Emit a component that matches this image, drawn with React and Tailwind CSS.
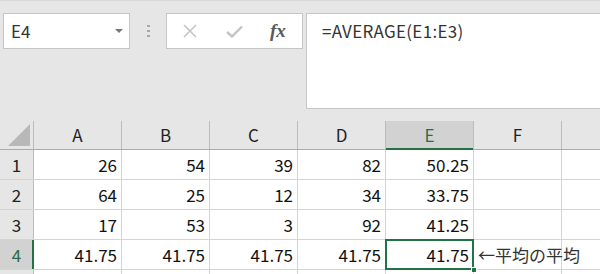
import React from "react";

const FONT = { fontFamily: '"Noto Sans CJK JP", "Noto Sans", sans-serif' };

const cols = ["A", "B", "C", "D", "E", "F"];
const rows = [
  ["26", "54", "39", "82", "50.25", ""],
  ["64", "25", "12", "34", "33.75", ""],
  ["17", "53", "3", "92", "41.25", ""],
  ["41.75", "41.75", "41.75", "41.75", "41.75", ""],
];

const FormulaArea = () => (
  <div className="flex h-[121px] bg-[#e6e6e6] border-t border-[#d9d9d9] pl-[3px] pt-[12px]">
    {/* name box */}
    <div className="relative flex h-[36px] w-[127px] items-center border border-[#c6c6c6] bg-white pl-[7px] text-[17px] text-[#333]">
      E4
      <span className="absolute right-[6px] top-[15px] h-0 w-0 border-x-[4px] border-t-[4px] border-x-transparent border-t-[#777]"></span>
    </div>
    {/* grip dots */}
    <div className="ml-[17px] mt-[12px] flex h-[13px] flex-col gap-[3px]">
      <span className="h-[2px] w-[3px] bg-[#a8a8a8]"></span>
      <span className="h-[2px] w-[3px] bg-[#a8a8a8]"></span>
      <span className="h-[2px] w-[3px] bg-[#a8a8a8]"></span>
    </div>
    {/* cancel / enter / fx */}
    <div className="ml-[16px] flex h-[36px] w-[137px] items-center border border-[#c6c6c6] bg-white">
      <svg width="14" height="14" viewBox="0 0 14 14" className="ml-[16px]">
        <path d="M1 1 L13 13 M13 1 L1 13" stroke="#c4c4c4" strokeWidth="1.6" fill="none" />
      </svg>
      <svg width="17" height="13" viewBox="0 0 17 13" className="ml-[29px]">
        <path d="M1 7 L6 11.5 L16 1.5" stroke="#c4c4c4" strokeWidth="2.4" fill="none" />
      </svg>
      <span
        className="ml-[27px] text-[19px] font-bold italic text-[#5a5a5a]"
        style={{ fontFamily: '"Liberation Serif", "DejaVu Serif", serif' }}
      >
        fx
      </span>
    </div>
    {/* formula input */}
    <div className="ml-[3px] h-[96px] flex-1 border border-r-0 border-[#c6c6c6] bg-white pl-[15px] pt-[4px] text-[17px] tracking-[0.3px] text-[#333]">
      =AVERAGE(E1:E3)
    </div>
  </div>
);

const Grid = () => (
  <div className="bg-white">
    {/* column headers */}
    <div className="flex h-[29px] bg-[#e6e6e6] border-b border-[#ababab]">
      <div className="relative w-[34px] shrink-0 border-r border-[#bcbcbc]">
        <svg width="22" height="22" viewBox="0 0 22 22" className="absolute right-[3px] bottom-[3px]">
          <polygon points="22,0 22,22 0,22" fill="#b8b8b8" />
        </svg>
      </div>
      {cols.map((c) => (
        <div
          key={c}
          className={
            c === "E"
              ? "relative flex w-[88px] shrink-0 items-center justify-center border-r border-[#bcbcbc] bg-[#d2d2d2] text-[17px] text-[#2c6b47]"
              : "flex w-[88px] shrink-0 items-center justify-center border-r border-[#bcbcbc] text-[17px] text-[#222]"
          }
        >
          {c}
          {c === "E" && <span className="absolute -bottom-px left-0 right-0 h-[2px] bg-[#217346]"></span>}
        </div>
      ))}
      <div className="flex-1"></div>
    </div>
    {rows.map((r, i) => (
      <div key={i} className="flex h-[30px] border-b border-[#d4d4d4]">
        <div
          className={
            i === 3
              ? "relative flex w-[34px] shrink-0 items-center justify-center border-r border-[#bcbcbc] bg-[#d2d2d2] text-[17px] text-[#2c6b47]"
              : "flex w-[34px] shrink-0 items-center justify-center border-r border-[#bcbcbc] bg-[#e6e6e6] text-[17px] text-[#222]"
          }
        >
          {i + 1}
          {i === 3 && <span className="absolute -right-px top-0 bottom-0 w-[2px] bg-[#217346]"></span>}
        </div>
        {r.map((v, j) => (
          <div
            key={j}
            className="relative flex w-[88px] shrink-0 items-center justify-end border-r border-[#d4d4d4] pr-[4px] text-[17px] text-[#111]"
          >
            {v}
            {i === 3 && j === 4 && (
              <>
                <span className="pointer-events-none absolute -left-px -top-px -right-px -bottom-px border-2 border-[#217346]"></span>
                <span className="absolute -right-[4px] -bottom-[4px] h-[6px] w-[6px] border border-white bg-[#217346]"></span>
              </>
            )}
            {i === 3 && j === 5 && (
              <span className="absolute left-[4px] top-0 flex h-full items-center whitespace-nowrap text-[17px] text-[#333]">
                ←平均の平均
              </span>
            )}
          </div>
        ))}
        <div className="flex-1"></div>
      </div>
    ))}
    <div className="flex h-[10px]">
      <div className="w-[34px] shrink-0 border-r border-[#bcbcbc] bg-[#e6e6e6]"></div>
      {cols.map((c) => (
        <div key={c} className="w-[88px] shrink-0 border-r border-[#d4d4d4]"></div>
      ))}
    </div>
  </div>
);

export default function App() {
  return (
    <div className="h-[274px] w-[600px] overflow-hidden" style={FONT}>
      <FormulaArea />
      <Grid />
    </div>
  );
}
